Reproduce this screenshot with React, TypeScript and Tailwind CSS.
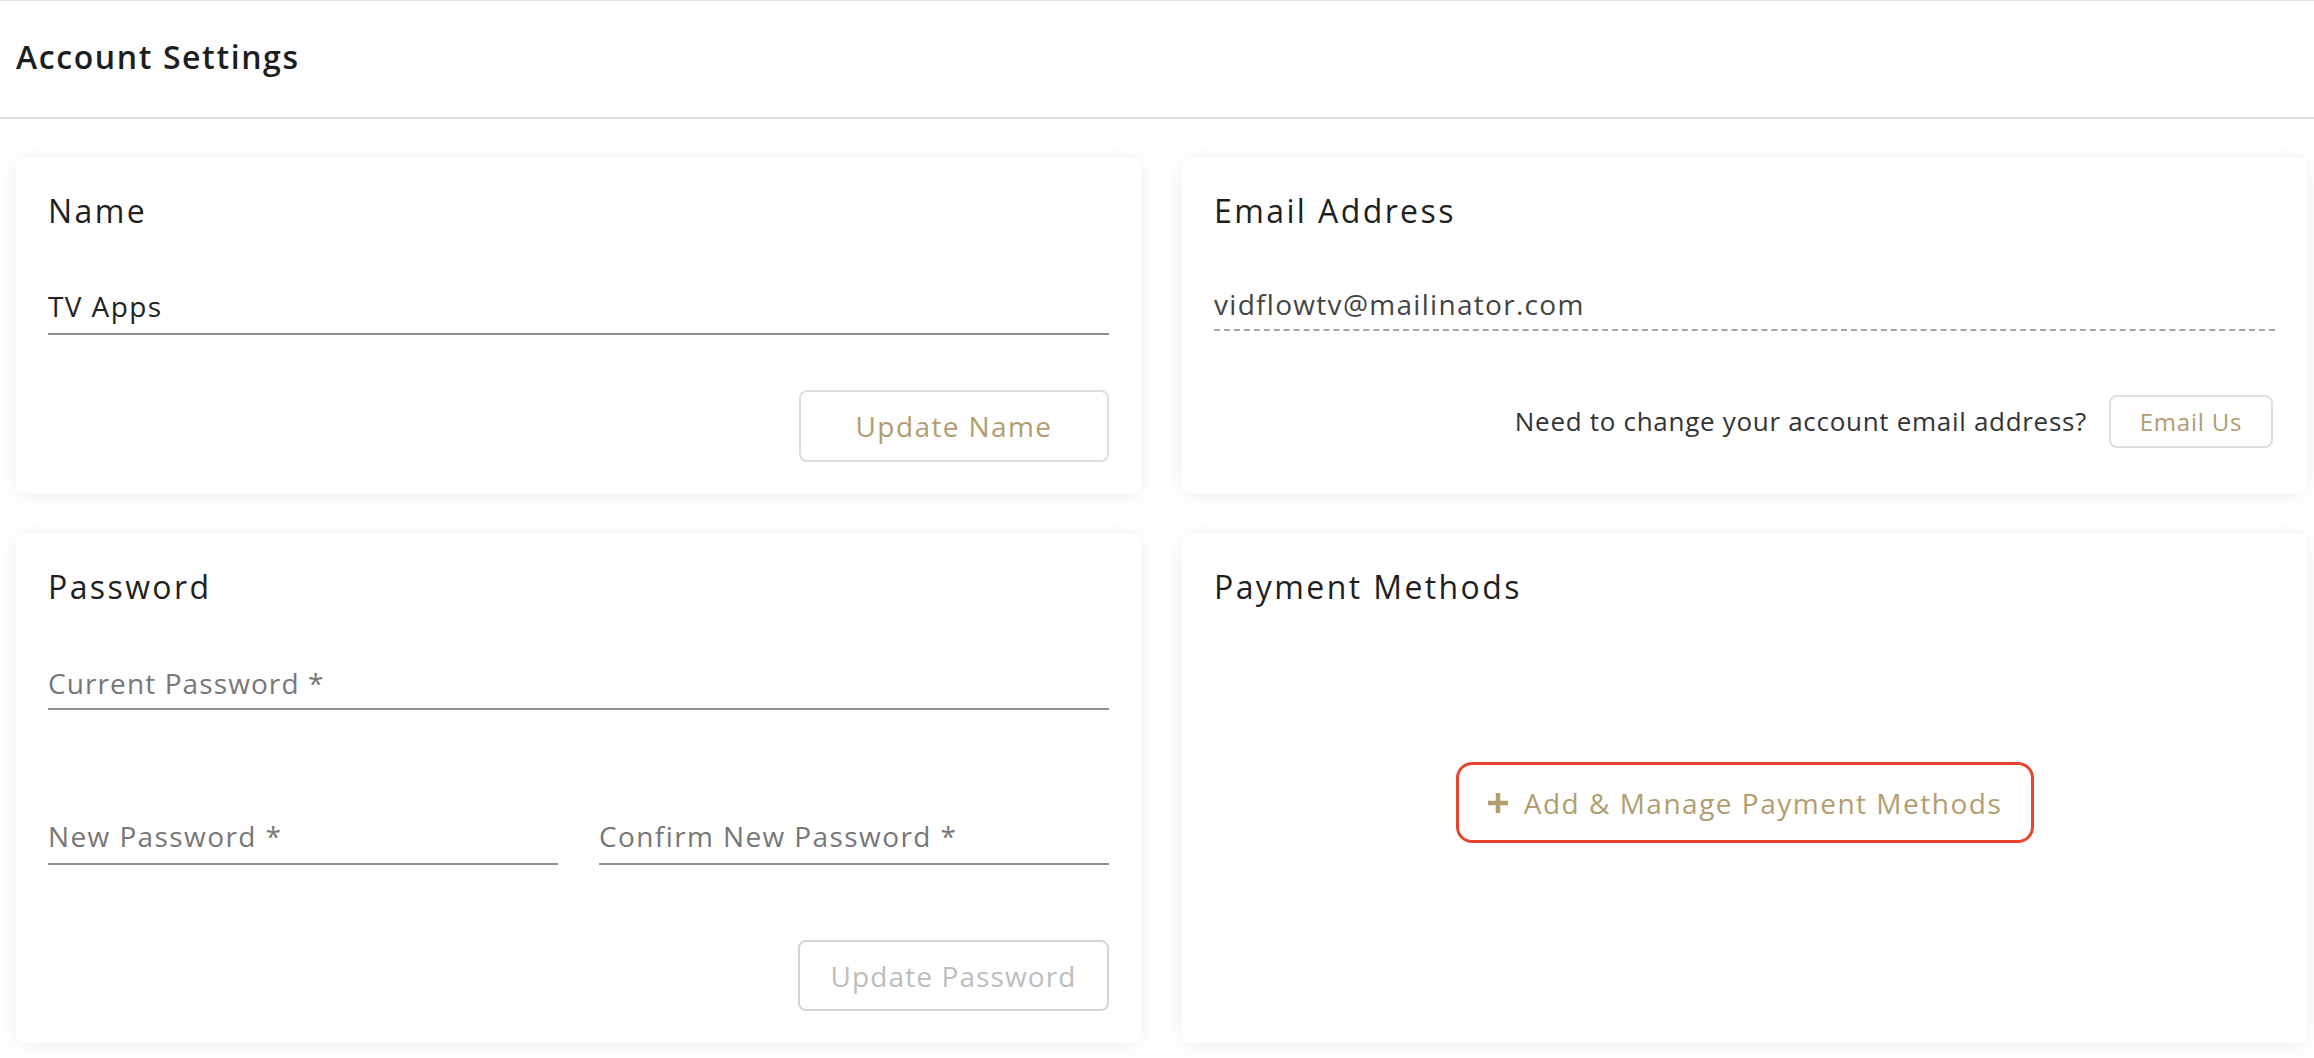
import React from "react";

const font = { fontFamily: '"Open Sans", "Noto Sans", Arial, sans-serif' };

function Card({ children, className = "" }: { children: React.ReactNode; className?: string }) {
  return (
    <div
      className={`bg-white rounded-[8px] shadow-[0_2px_24px_rgba(0,0,0,0.07)] px-[32px] pt-[33px] pb-[31px] flex flex-col ${className}`}
    >
      {children}
    </div>
  );
}

function Title({ children }: { children: React.ReactNode }) {
  return <h2 className="text-[32px] leading-[40px] font-medium text-[#1f1f1f] tracking-[2.4px]">{children}</h2>;
}

function Field({ label, value, className = "" }: { label?: string; value?: string; className?: string }) {
  return (
    <div className={`border-b-2 border-[#8f8f8f] pb-[7px] ${className}`}>
      <div
        className={`text-[28px] leading-[40px] tracking-[1.4px] ${value ? "text-[#222222]" : "text-[#777777]"}`}
      >
        {value ?? label}
      </div>
    </div>
  );
}

export default function App() {
  return (
    <div className="min-h-screen w-full bg-white" style={font}>
      <header className="h-[119px] border-t border-t-[#e4e4e4] border-b-2 border-b-[#dddddd] flex items-center px-[16px]">
        <h1 className="text-[32px] font-semibold text-[#1e1e1e] tracking-[1.6px] -mt-[4px]">Account Settings</h1>
      </header>

      <main className="pl-[16px] pr-[7px] pt-[39px] grid grid-cols-2 gap-[41px]">
        {/* Name */}
        <Card className="h-[335px]">
          <Title>Name</Title>
          <Field value="TV Apps" className="mt-[55px]" />
          <div className="flex justify-end mt-[55px]">
            <button className="w-[310px] h-[72px] rounded-[8px] border-2 border-[#dedede] text-[#b29d6f] text-[28px] tracking-[1.4px] bg-white">
              Update Name
            </button>
          </div>
        </Card>

        {/* Email */}
        <Card className="h-[335px]">
          <Title>Email Address</Title>
          <div className="mt-[53px] border-b-2 border-dashed border-[#a5a5a5] pb-[5px]">
            <div className="text-[28px] leading-[40px] text-[#444444] tracking-[1.3px]">vidflowtv@mailinator.com</div>
          </div>
          <div className="flex justify-end items-center gap-[22px] mt-[64px] pr-[2px]">
            <span className="text-[26px] text-[#333333] tracking-[0.7px]">Need to change your account email address?</span>
            <button className="w-[164px] h-[53px] rounded-[8px] border-2 border-[#dedede] text-[#b29d6f] text-[24px] tracking-[0.8px] bg-white">
              Email Us
            </button>
          </div>
        </Card>

        {/* Password */}
        <Card className="h-[509px]">
          <Title>Password</Title>
          <div className="mt-[56px] border-b-2 border-[#8f8f8f] pb-[5px]">
            <div className="text-[28px] leading-[40px] text-[#777777] tracking-[1.1px]">Current Password *</div>
          </div>
          <div className="grid grid-cols-2 gap-[41px] mt-[106px]">
            <Field label="New Password *" />
            <Field label="Confirm New Password *" />
          </div>
          <div className="flex justify-end mt-[75px]">
            <button className="w-[311px] h-[71px] rounded-[8px] border-2 border-[#d4d4d4] text-[#bdbdbd] text-[28px] tracking-[1.1px] bg-white">
              Update Password
            </button>
          </div>
        </Card>

        {/* Payment */}
        <Card className="h-[509px]">
          <Title>Payment Methods</Title>
          <div className="flex justify-center mt-[155px]">
            <button className="h-[81px] w-[578px] rounded-[16px] border-[3px] border-[#e8432b] bg-white flex items-center justify-center gap-[15px] text-[#b29d6f]">
              <svg width="22" height="22" viewBox="0 0 22 22" className="shrink-0">
                <path d="M11 1v20M1 11h20" stroke="#b29d6f" strokeWidth="4.5" strokeLinecap="butt" />
              </svg>
              <span className="text-[28px] tracking-[1.5px] font-medium">Add &amp; Manage Payment Methods</span>
            </button>
          </div>
        </Card>
      </main>
    </div>
  );
}
